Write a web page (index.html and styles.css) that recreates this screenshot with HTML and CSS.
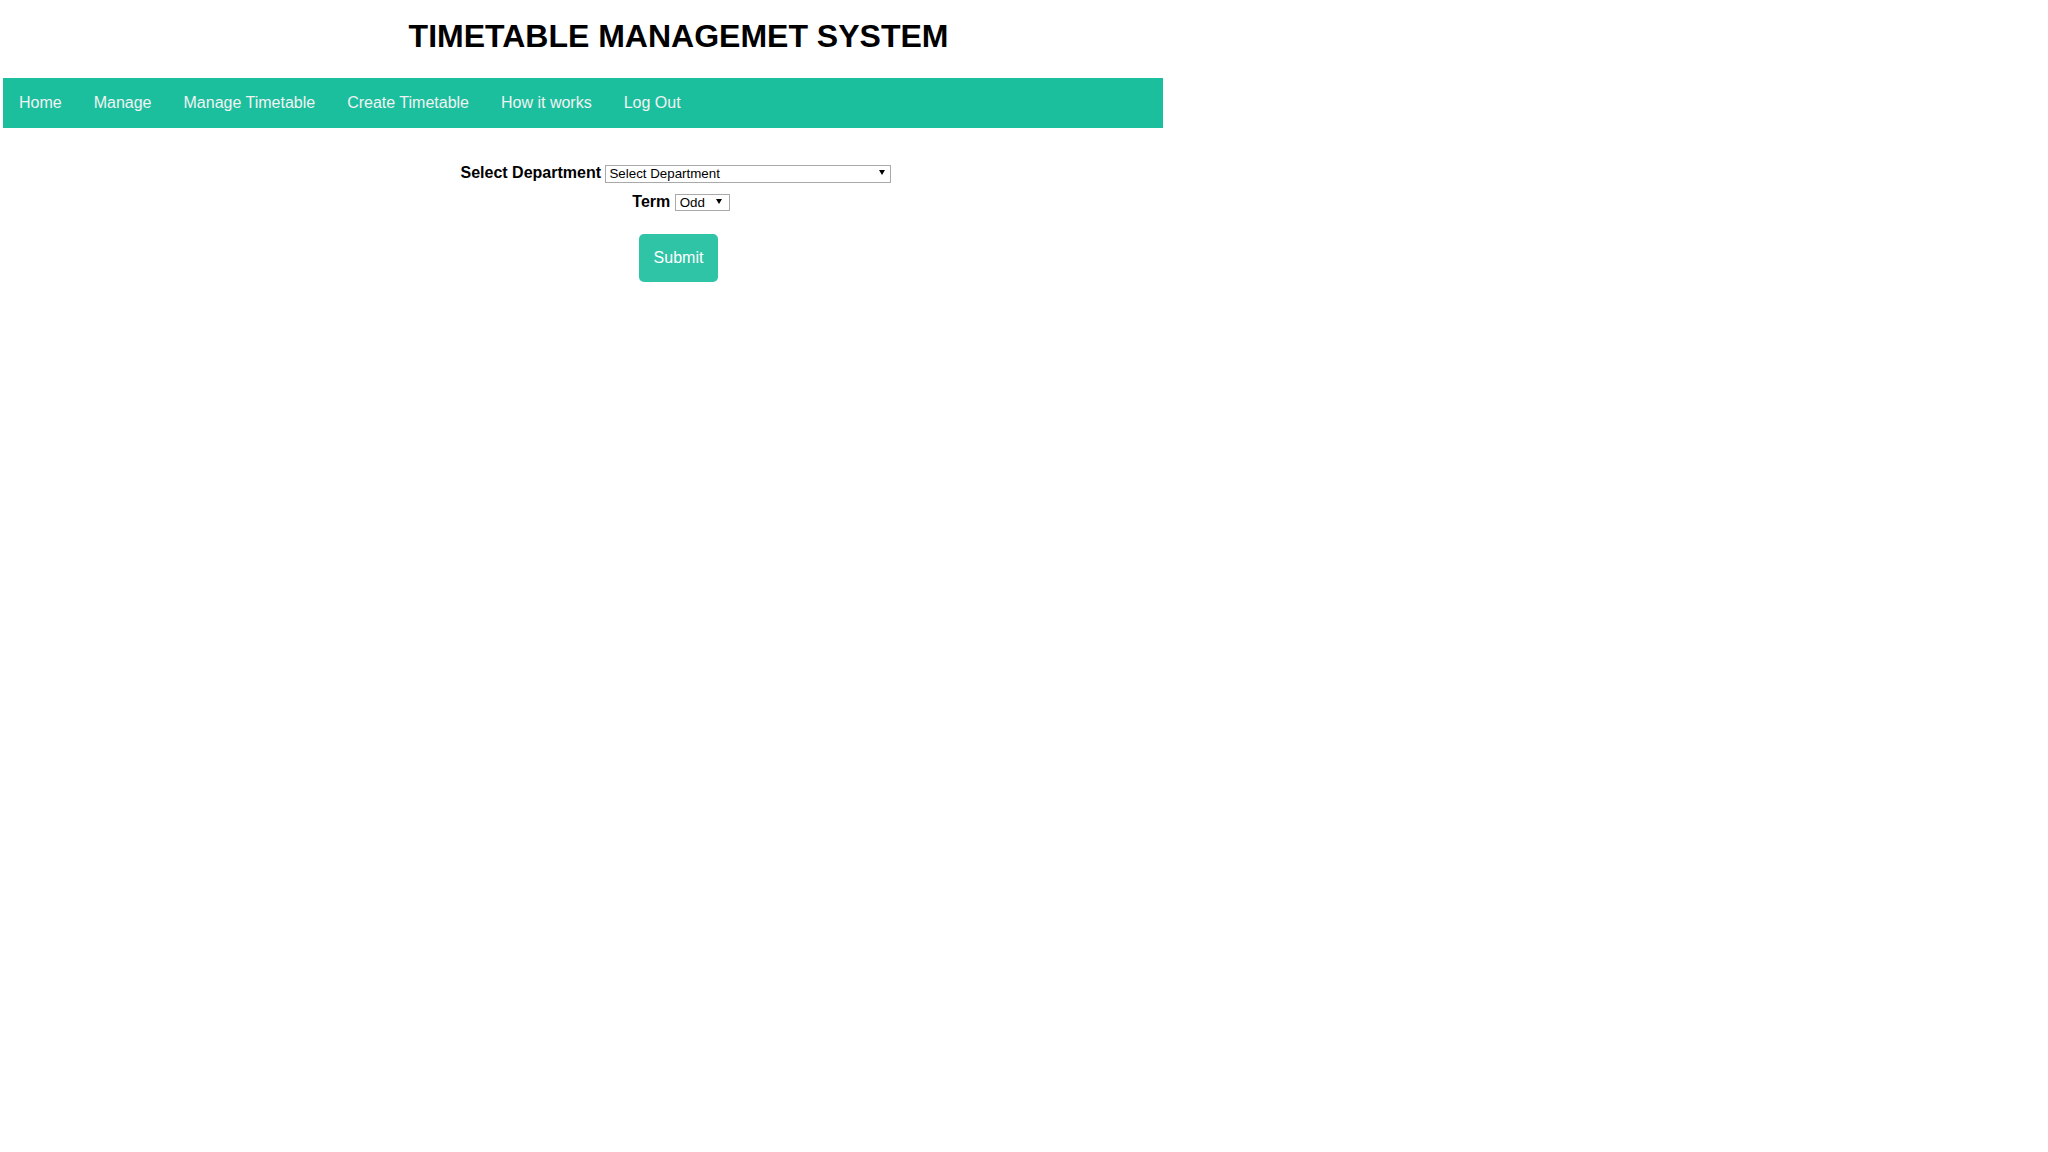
FILE: index.html
```html
<!DOCTYPE html>
<html lang="en">
<head>
<meta charset="utf-8">
<title>Timetable Management System</title>
<link rel="stylesheet" href="styles.css">
</head>
<body>
<div class="page">
  <header class="masthead">
    <h1 class="title">TIMETABLE MANAGEMET SYSTEM</h1>
  </header>
  <nav class="topnav">
    <a class="nav-link" href="#">Home</a>
    <a class="nav-link" href="#">Manage</a>
    <a class="nav-link" href="#">Manage Timetable</a>
    <a class="nav-link" href="#">Create Timetable</a>
    <a class="nav-link" href="#">How it works</a>
    <a class="nav-link" href="#">Log Out</a>
  </nav>
  <main class="content">
    <form class="dept-form">
      <div class="row row-dept"><label class="field-label">Select Department</label> <span class="sel sel-wide"><select class="dropdown"><option>Select Department</option></select></span></div>
      <div class="row row-term"><label class="field-label">Term</label> <span class="sel sel-narrow"><select class="dropdown"><option>Odd</option><option>Even</option></select></span></div>
      <div class="actions"><button class="submit" type="button">Submit</button></div>
    </form>
  </main>
</div>
</body>
</html>
```

FILE: styles.css
```css
html, body {
  margin: 0;
  padding: 0;
  background: #ffffff;
}

body {
  font-family: "Liberation Sans", Arial, sans-serif;
  color: #000000;
}

.masthead {
  width: 1357px;
  text-align: center;
  padding-top: 18px;
  padding-bottom: 23px;
}

.title {
  margin: 0;
  font-size: 32px;
  line-height: 37px;
  font-weight: bold;
  color: #000000;
}

.topnav {
  margin-left: 3px;
  width: 1160px;
  height: 50px;
  background: #1bbf9e;
  display: flex;
}

.nav-link {
  display: block;
  padding: 16px;
  font-size: 16px;
  line-height: 18px;
  color: #f2f2f2;
  text-decoration: none;
}

.content {
  width: 1357px;
  padding-top: 30px;
  text-align: center;
}

.row {
  font-size: 16px;
  line-height: 30px;
}

.row-dept {
  padding-right: 5px;
  line-height: 29px;
}

.row-term {
  padding-left: 5px;
}

.field-label {
  font-weight: bold;
}

.sel {
  position: relative;
  display: inline-block;
  line-height: normal;
}

.dropdown {
  -webkit-appearance: none;
  appearance: none;
  box-sizing: border-box;
  height: 18px;
  margin: 0;
  padding: 0 0 0 3px;
  border: 1px solid #a9a9a9;
  border-radius: 0;
  background: #ffffff;
  color: #000000;
  font-family: "Liberation Sans", Arial, sans-serif;
  font-size: 13.33px;
  vertical-align: baseline;
}

.sel-wide .dropdown {
  width: 286px;
}

.sel-narrow .dropdown {
  width: 55px;
  height: 17px;
  padding-left: 4px;
}

.sel::after {
  content: "";
  position: absolute;
  right: 6px;
  top: 6px;
  border-left: 3px solid transparent;
  border-right: 3px solid transparent;
  border-top: 5px solid #000000;
  pointer-events: none;
}

.sel-narrow::after {
  right: 8px;
}

.actions {
  margin-top: 17px;
}

.submit {
  margin: 0;
  padding: 15px;
  border: none;
  border-radius: 5px;
  background: #30c4a7;
  color: #ffffff;
  font-family: "Liberation Sans", Arial, sans-serif;
  font-size: 16px;
  line-height: 18px;
}
```
